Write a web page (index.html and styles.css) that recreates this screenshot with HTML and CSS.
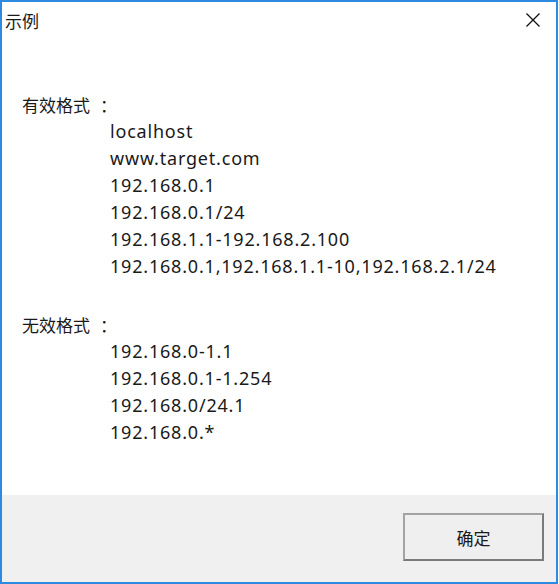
FILE: index.html
```html
<!DOCTYPE html>
<html lang="zh">
<head>
    <meta charset="UTF-8">
    <title>示例</title>
    <link rel="stylesheet" href="styles.css">
</head>
<body>
    <div class="window">
        <div class="titlebar">
            <span class="title">示例</span>
            <span class="close">
                <svg width="16" height="16" viewBox="0 0 16 16">
                    <path d="M1.5 1.5 L14.5 14.5 M14.5 1.5 L1.5 14.5" stroke="#111" stroke-width="1.3" fill="none"/>
                </svg>
            </span>
        </div>

        <div class="content">
            <div class="section">
                <div class="heading">有效格式<span class="colon">：</span></div>
                <div class="item">localhost</div>
                <div class="item">www.target.com</div>
                <div class="item">192.168.0.1</div>
                <div class="item">192.168.0.1/24</div>
                <div class="item">192.168.1.1-192.168.2.100</div>
                <div class="item">192.168.0.1,192.168.1.1-10,192.168.2.1/24</div>
            </div>
            <div class="section second">
                <div class="heading">无效格式<span class="colon">：</span></div>
                <div class="item">192.168.0-1.1</div>
                <div class="item">192.168.0.1-1.254</div>
                <div class="item">192.168.0/24.1</div>
                <div class="item">192.168.0.*</div>
            </div>
        </div>

        <div class="footer">
            <button class="ok_btn">确定</button>
        </div>
    </div>
</body>
</html>
```

FILE: styles.css
```css
*, *:after, *:before {
    box-sizing: border-box;
}

body {
    margin: 0;
    background: white;
    font-family: "Noto Sans", "Noto Sans CJK SC", sans-serif;
    color: #1a1a1a;
}

.window {
    width: 558px;
    height: 584px;
    border: 2px solid #2d8ae0;
    display: flex;
    flex-direction: column;
    background: white;
}

.titlebar {
    height: 36px;
    display: flex;
    align-items: center;
    justify-content: space-between;
    padding: 0 15px 0 3px;
}

.title {
    font-family: "Noto Sans CJK SC", sans-serif;
    font-size: 17px;
}

.close {
    display: flex;
    align-items: center;
}

.content {
    flex: 1;
    padding: 53px 0 0 20px;
    font-size: 18px;
    line-height: 27px;
}

.heading {
    font-family: "Noto Sans CJK SC", sans-serif;
    font-size: 17px;
}

.colon {
    margin-left: 10px;
}

.item {
    padding-left: 88px;
    letter-spacing: 0.8px;
}

.second {
    margin-top: 31px;
}

.footer {
    height: 87px;
    background: #f0f0f0;
    display: flex;
    justify-content: flex-end;
    padding: 18px 12px 0 0;
}

.ok_btn {
    width: 141px;
    height: 48px;
    font-family: "Noto Sans CJK SC", sans-serif;
    font-size: 17px;
    color: #1a1a1a;
    background: #efefef;
    border: 2px solid #7a7a7a;
    border-top-color: #a3a3a3;
    border-left-color: #a3a3a3;
    cursor: pointer;
}
```
